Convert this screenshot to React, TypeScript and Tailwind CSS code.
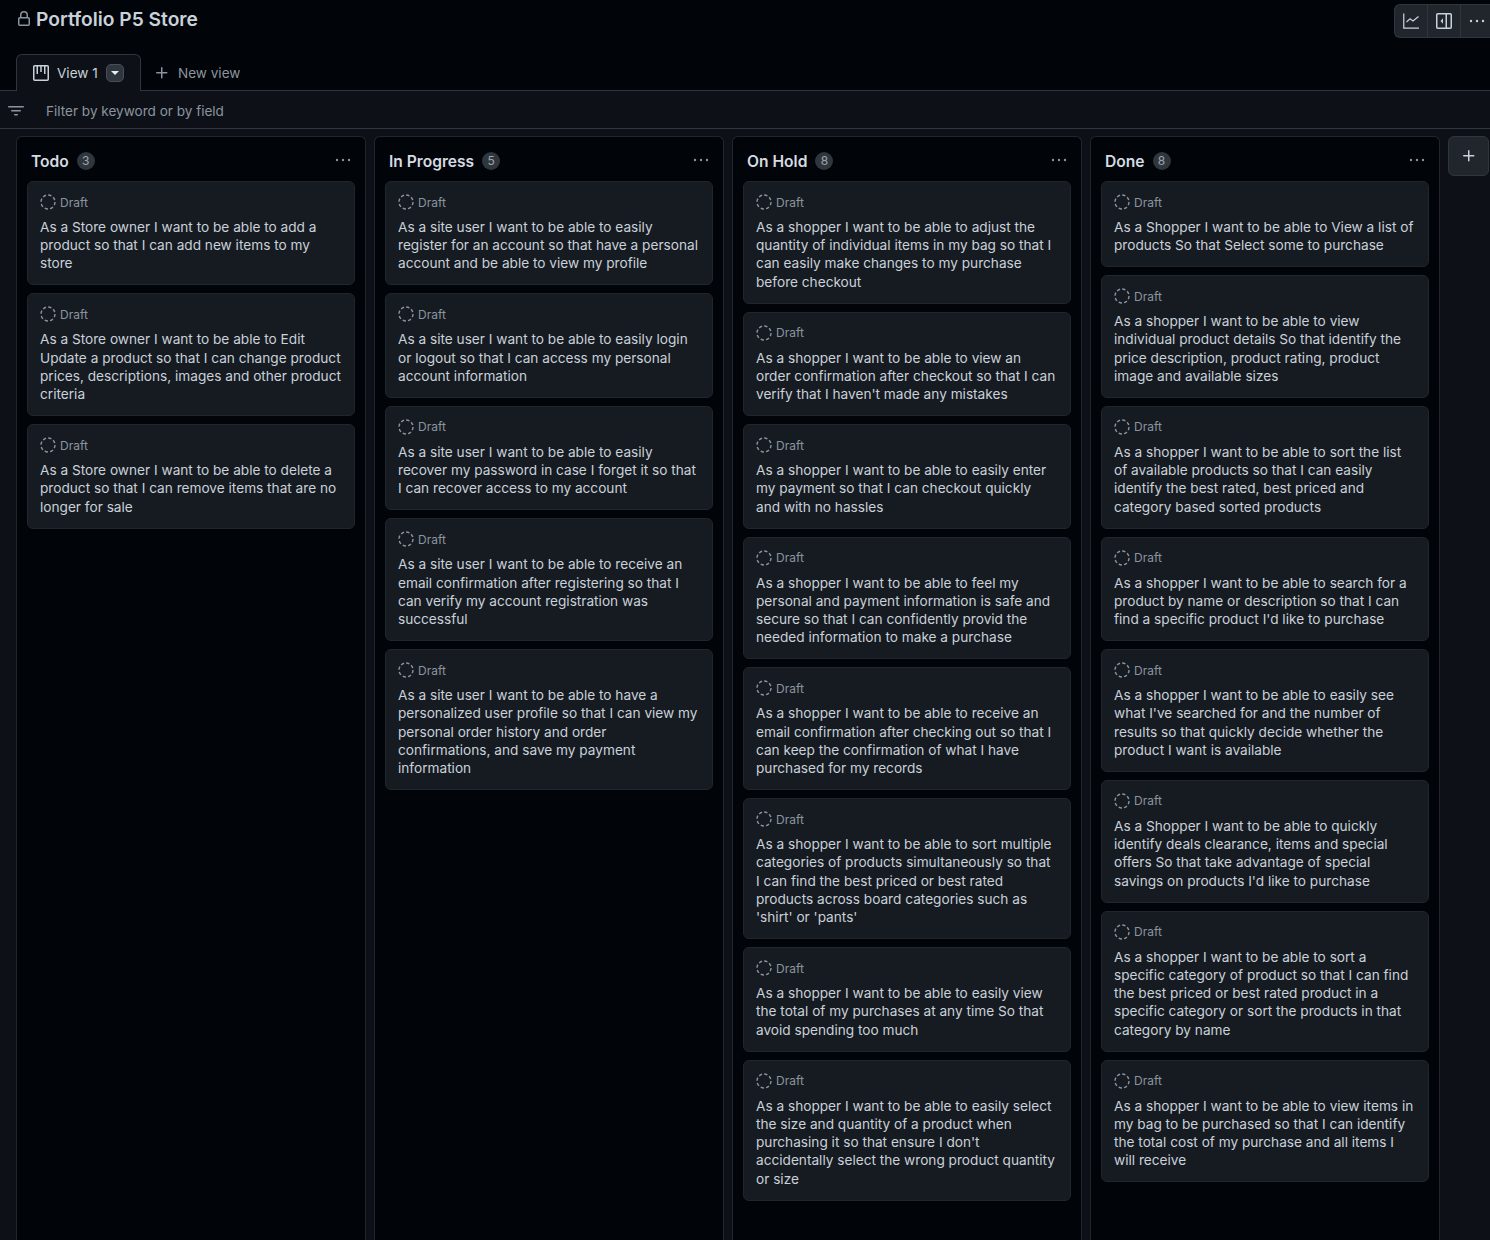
const columns = [
  {
    name: "Todo",
    cards: [
      "As a Store owner I want to be able to add a product so that I can add new items to my store",
      "As a Store owner I want to be able to Edit Update a product so that I can change product prices, descriptions, images and other product criteria",
      "As a Store owner I want to be able to delete a product so that I can remove items that are no longer for sale",
    ],
  },
  {
    name: "In Progress",
    cards: [
      "As a site user I want to be able to easily register for an account so that have a personal account and be able to view my profile",
      "As a site user I want to be able to easily login or logout so that I can access my personal account information",
      "As a site user I want to be able to easily recover my password in case I forget it so that I can recover access to my account",
      "As a site user I want to be able to receive an email confirmation after registering so that I can verify my account registration was successful",
      "As a site user I want to be able to have a personalized user profile so that I can view my personal order history and order confirmations, and save my payment information",
    ],
  },
  {
    name: "On Hold",
    cards: [
      "As a shopper I want to be able to adjust the quantity of individual items in my bag so that I can easily make changes to my purchase before checkout",
      "As a shopper I want to be able to view an order confirmation after checkout so that I can verify that I haven't made any mistakes",
      "As a shopper I want to be able to easily enter my payment so that I can checkout quickly and with no hassles",
      "As a shopper I want to be able to feel my personal and payment information is safe and secure so that I can confidently provid the needed information to make a purchase",
      "As a shopper I want to be able to receive an email confirmation after checking out so that I can keep the confirmation of what I have purchased for my records",
      "As a shopper I want to be able to sort multiple categories of products simultaneously so that I can find the best priced or best rated products across board categories such as 'shirt' or 'pants'",
      "As a shopper I want to be able to easily view the total of my purchases at any time So that avoid spending too much",
      "As a shopper I want to be able to easily select the size and quantity of a product when purchasing it so that ensure I don't accidentally select the wrong product quantity or size",
    ],
  },
  {
    name: "Done",
    cards: [
      "As a Shopper I want to be able to View a list of products So that Select some to purchase",
      "As a shopper I want to be able to view individual product details So that identify the price description, product rating, product image and available sizes",
      "As a shopper I want to be able to sort the list of available products so that I can easily identify the best rated, best priced and category based sorted products",
      "As a shopper I want to be able to search for a product by name or description so that I can find a specific product I'd like to purchase",
      "As a shopper I want to be able to easily see what I've searched for and the number of results so that quickly decide whether the product I want is available",
      "As a Shopper I want to be able to quickly identify deals clearance, items and special offers So that take advantage of special savings on products I'd like to purchase",
      "As a shopper I want to be able to sort a specific category of product so that I can find the best priced or best rated product in a specific category or sort the products in that category by name",
      "As a shopper I want to be able to view items in my bag to be purchased so that I can identify the total cost of my purchase and all items I will receive",
    ],
  },
]

function Dots({ className }: { className?: string }) {
  return (
    <svg width="16" height="16" viewBox="0 0 16 16" fill="currentColor" className={className}>
      <circle cx="2" cy="8" r="1.2" />
      <circle cx="8" cy="8" r="1.2" />
      <circle cx="14" cy="8" r="1.2" />
    </svg>
  )
}

function PlusIcon({ className }: { className?: string }) {
  return (
    <svg width="16" height="16" viewBox="0 0 16 16" fill="currentColor" className={className}>
      <path d="M7.75 2a.75.75 0 0 1 .75.75V7h4.25a.75.75 0 0 1 0 1.5H8.5v4.25a.75.75 0 0 1-1.5 0V8.5H2.75a.75.75 0 0 1 0-1.5H7V2.75A.75.75 0 0 1 7.75 2Z" />
    </svg>
  )
}

function DraftIcon() {
  return (
    <svg width="16" height="16" viewBox="0 0 16 16" fill="none" stroke="#8b949e" strokeWidth="1.4" className="shrink-0">
      <circle cx="8" cy="8" r="7" strokeDasharray="3.3 2.2" />
    </svg>
  )
}

function Card({ text }: { text: string }) {
  return (
    <div className="rounded-md border border-[#21262d] bg-[#161b22] px-3 pt-3 pb-[11.85px]">
      <div className="flex h-4 items-center gap-1 text-xs text-[#8b949e]">
        <DraftIcon />
        <span className="pt-px">Draft</span>
      </div>
      <p className="mt-[7.9px] text-[13.65px] leading-[18.25px] text-[#c9d1d9]">{text}</p>
    </div>
  )
}

function Column({ name, cards }: { name: string; cards: string[] }) {
  return (
    <section className="w-[350px] shrink-0 rounded-t-md border border-b-0 border-[#21262d] bg-[#010409] px-[10px] pb-10">
      <header className="flex h-[44px] items-center justify-between pt-[5px] pl-[4px] pr-[4px]">
        <div className="flex items-center gap-2">
          <h2 className="text-[15.6px] font-semibold text-[#d5dbe1]">{name}</h2>
          <span className="flex h-[18px] min-w-[18px] items-center justify-center rounded-full bg-[#30363d] text-xs text-[#9da5ae]">
            {cards.length}
          </span>
        </div>
        <Dots className="-mt-[3px] text-[#8b949e]" />
      </header>
      <div className="flex flex-col gap-2">
        {cards.map((c) => (
          <Card key={c} text={c} />
        ))}
      </div>
    </section>
  )
}

export default function App() {
  return (
    <div className="flex h-[1240px] flex-col overflow-hidden bg-[#010409] font-['Inter',sans-serif]">
      <div className="flex h-[54px] shrink-0 items-start justify-between pl-4">
        <div className="flex items-center gap-1 pt-[6px]">
          <svg width="16" height="16" viewBox="0 0 16 16" fill="#8b949e">
            <path d="M4 4a4 4 0 0 1 8 0v2h.25c.966 0 1.75.784 1.75 1.75v5.5A1.75 1.75 0 0 1 12.25 15h-8.5A1.75 1.75 0 0 1 2 13.25v-5.5C2 6.784 2.784 6 3.75 6H4Zm8.25 3.5h-8.5a.25.25 0 0 0-.25.25v5.5c0 .138.112.25.25.25h8.5a.25.25 0 0 0 .25-.25v-5.5a.25.25 0 0 0-.25-.25ZM10.5 6V4a2.5 2.5 0 1 0-5 0v2Z" />
          </svg>
          <h1 className="text-[19.2px] font-semibold leading-[26px] text-[#c9d1d9]">Portfolio P5 Store</h1>
        </div>
        <div className="mt-1 flex h-[34px] w-[96px] overflow-hidden rounded-l-md border border-r-0 border-[#30363d] bg-[#21262d] text-[#c9d1d9]">
          <button className="flex w-[33px] items-center justify-center border-r border-[#30363d]">
            <svg width="16" height="16" viewBox="0 0 16 16" fill="none" stroke="currentColor" strokeWidth="1.25">
              <path d="M.75 .5V15H16" />
              <path d="M3.5 9 7 5.8 10 8 15.5 3.5" />
            </svg>
          </button>
          <button className="flex w-[33px] items-center justify-center border-r border-[#30363d]">
            <svg width="16" height="16" viewBox="0 0 16 16" fill="currentColor">
              <path d="M0 1.75C0 .784.784 0 1.75 0h12.5C15.216 0 16 .784 16 1.75v12.5A1.75 1.75 0 0 1 14.25 16H1.75A1.75 1.75 0 0 1 0 14.25Zm1.75-.25a.25.25 0 0 0-.25.25v12.5c0 .138.112.25.25.25H9.5v-13Zm12.5 13a.25.25 0 0 0 .25-.25V1.75a.25.25 0 0 0-.25-.25H11v13Z" />
              <path d="M7 5.25v5.5L4.5 8Z" />
            </svg>
          </button>
          <button className="flex flex-1 items-center justify-center pl-[2px]">
            <Dots />
          </button>
        </div>
      </div>

      <div className="flex h-[36px] shrink-0 items-end pl-4">
        <div className="relative -mb-px flex h-[37px] w-[125px] items-center gap-2 rounded-t-md border border-b-0 border-[#30363d] bg-[#0d1117] pl-4 text-[13.55px] text-[#c9d1d9]">
          <svg width="16" height="16" viewBox="0 0 16 16" fill="currentColor">
            <path d="M1.75 0h12.5C15.216 0 16 .784 16 1.75v12.5A1.75 1.75 0 0 1 14.25 16H1.75A1.75 1.75 0 0 1 0 14.25V1.75C0 .784.784 0 1.75 0Zm0 1.5a.25.25 0 0 0-.25.25v12.5c0 .138.112.25.25.25h12.5a.25.25 0 0 0 .25-.25V1.75a.25.25 0 0 0-.25-.25ZM3.5 1.5H5V9H3.5Zm3.75 0h1.5V7h-1.5Zm3.75 0h1.5V9H11Z" />
          </svg>
          <span>View 1</span>
          <span className="flex h-[18px] w-[18px] items-center justify-center rounded-[5px] border border-[#484f58] bg-[#30363d]">
            <span className="h-0 w-0 border-x-[4px] border-t-[4px] border-x-transparent border-t-[#e6edf3]" />
          </span>
        </div>
        <div className="flex h-[36px] items-center gap-2 pl-[13px] pt-[2px] text-[13.55px] text-[#8b949e]">
          <PlusIcon />
          <span>New view</span>
        </div>
      </div>

      <div className="flex h-[39px] shrink-0 items-center border-y border-[#30363d] bg-[#0d1117] pl-2 pt-[3px] text-[13.55px] text-[#8b949e]">
        <svg width="16" height="16" viewBox="0 0 16 16" fill="currentColor">
          <path d="M.75 3h14.5a.75.75 0 0 1 0 1.5H.75a.75.75 0 0 1 0-1.5ZM3 7.75A.75.75 0 0 1 3.75 7h8.5a.75.75 0 0 1 0 1.5h-8.5A.75.75 0 0 1 3 7.75Zm3 4a.75.75 0 0 1 .75-.75h2.5a.75.75 0 0 1 0 1.5h-2.5a.75.75 0 0 1-.75-.75Z" />
        </svg>
        <span className="ml-[22px]">Filter by keyword or by field</span>
      </div>

      <div className="flex min-h-0 flex-1 gap-2 bg-[#0d1117] pl-4 pt-[7px]">
        {columns.map((col) => (
          <Column key={col.name} name={col.name} cards={col.cards} />
        ))}
        <button className="flex h-10 w-[41px] shrink-0 items-center justify-center rounded-md border border-[#30363d] bg-[#21262d] text-[#c9d1d9]">
          <PlusIcon />
        </button>
      </div>
    </div>
  )
}
